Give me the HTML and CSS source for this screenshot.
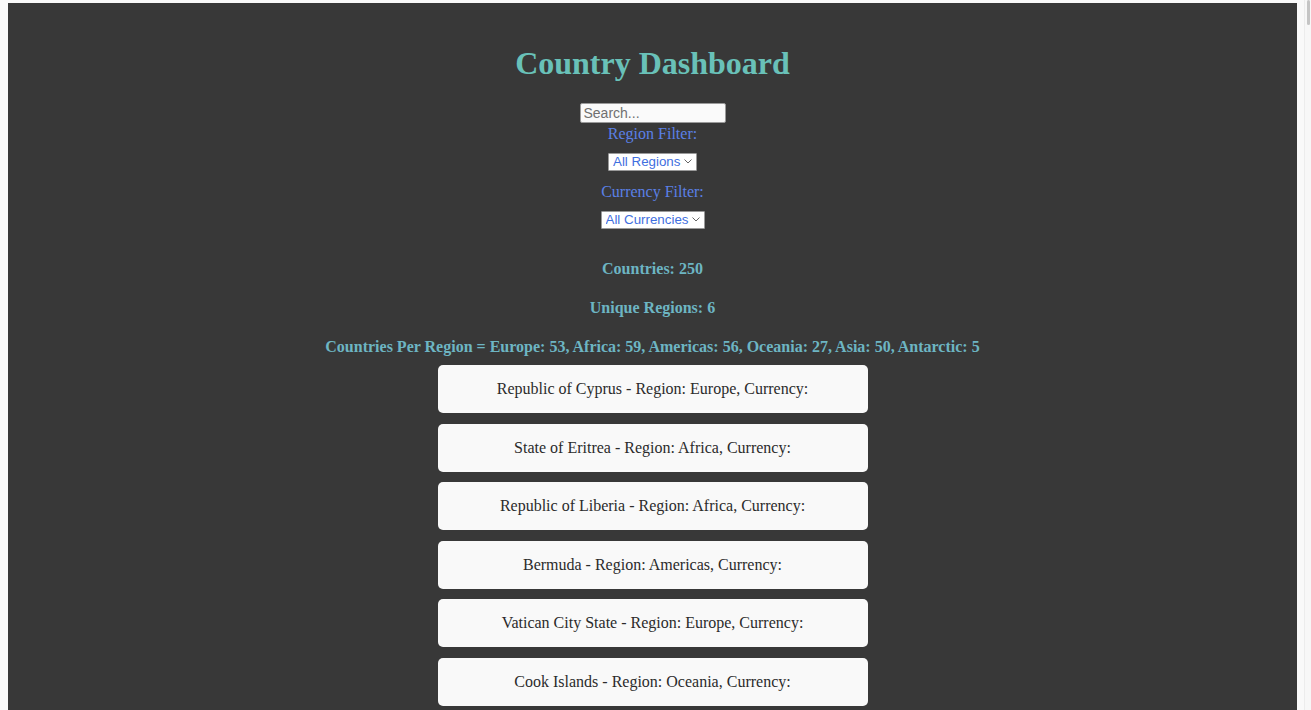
FILE: index.html
```html
<!DOCTYPE html>
<html lang="en">
<head>
<meta charset="utf-8">
<title>Country Dashboard</title>
<link rel="stylesheet" href="styles.css">
</head>
<body>
<div class="app">
  <h1 class="title">Country Dashboard</h1>
  <div class="filters">
    <input class="search" type="text" placeholder="Search...">
    <label class="filter-label">Region Filter:</label>
    <div class="select-wrap">
      <select class="filter-select">
        <option>All Regions</option>
      </select>
      <svg class="chev" width="8" height="5" viewBox="0 0 8 5"><path d="M0.5 0.5 L4 4 L7.5 0.5" fill="none" stroke="#666" stroke-width="1"/></svg>
    </div>
    <label class="filter-label">Currency Filter:</label>
    <div class="select-wrap">
      <select class="filter-select">
        <option>All Currencies</option>
      </select>
      <svg class="chev" width="8" height="5" viewBox="0 0 8 5"><path d="M0.5 0.5 L4 4 L7.5 0.5" fill="none" stroke="#666" stroke-width="1"/></svg>
    </div>
  </div>
  <div class="stats">
    <h4 class="stat">Countries: 250</h4>
    <h4 class="stat">Unique Regions: 6</h4>
    <h4 class="stat stat-last">Countries Per Region = Europe: 53, Africa: 59, Americas: 56, Oceania: 27, Asia: 50, Antarctic: 5</h4>
  </div>
  <div class="list">
    <div class="card">Republic of Cyprus - Region: Europe, Currency:</div>
    <div class="card">State of Eritrea - Region: Africa, Currency:</div>
    <div class="card">Republic of Liberia - Region: Africa, Currency:</div>
    <div class="card">Bermuda - Region: Americas, Currency:</div>
    <div class="card">Vatican City State - Region: Europe, Currency:</div>
    <div class="card">Cook Islands - Region: Oceania, Currency:</div>
  </div>
</div>
<div class="scrollbar"><div class="thumb"></div></div>
</body>
</html>
```

FILE: styles.css
```css
html {
  background: #f9f9f9;
  overflow: hidden;
}
body {
  margin: 3px 14px 0 8px;
  font-family: "Liberation Serif", "Times New Roman", serif;
}
.app {
  background: #383838;
  min-height: 800px;
  padding-top: 21px;
  display: flex;
  flex-direction: column;
  align-items: center;
}
.title {
  margin: 21px 0 21px;
  font-size: 32px;
  line-height: 37px;
  font-weight: bold;
  color: #69c1b8;
}
.filters {
  display: flex;
  flex-direction: column;
  align-items: center;
}
.search {
  box-sizing: border-box;
  width: 146px;
  height: 20px;
  margin: 0;
  padding: 1px 3px;
  border: 1px solid #9a9a9a;
  border-radius: 2px;
  background: #fafafa;
  font-family: "Liberation Sans", Arial, sans-serif;
  font-size: 14px;
  color: #333;
  outline: none;
}
.search::placeholder {
  color: #707070;
}
.filter-label {
  display: block;
  font-size: 16px;
  line-height: 19px;
  color: #5b80e6;
  margin-top: 1px;
}
.select-wrap {
  position: relative;
  margin: 9px 0 10px;
}
.filter-select {
  -webkit-appearance: none;
  appearance: none;
  box-sizing: border-box;
  height: 18px;
  margin: 0;
  padding: 0 15px 0 4px;
  border: 1px solid #9a9a9a;
  border-radius: 1px;
  background: #fff;
  font-family: "Liberation Sans", Arial, sans-serif;
  font-size: 13.33px;
  line-height: 16px;
  color: #3f6fe0;
  outline: none;
}
.chev {
  position: absolute;
  right: 5px;
  top: 7px;
  pointer-events: none;
}
.stats {
  display: flex;
  flex-direction: column;
  align-items: center;
}
.stat {
  margin: 21px 0 0;
  font-size: 16px;
  line-height: 18px;
  font-weight: bold;
  color: #6db5c3;
}
.stat-last {
  margin-bottom: 9px;
}
.list {
  display: flex;
  flex-direction: column;
  gap: 10.5px;
}
.card {
  box-sizing: border-box;
  width: 430px;
  height: 48px;
  display: flex;
  align-items: center;
  justify-content: center;
  background: #f9f9f9;
  border-radius: 5px;
  font-size: 16px;
  color: #2b2b2b;
}
.scrollbar {
  position: fixed;
  top: 0;
  right: 0;
  width: 6px;
  height: 100%;
  border-left: 1px solid #ececec;
  background: #f7f7f7;
}
.thumb {
  margin: 0 1px 0 2px;
  height: 25px;
  background: #c4c4c4;
  border-radius: 2px;
}
```
